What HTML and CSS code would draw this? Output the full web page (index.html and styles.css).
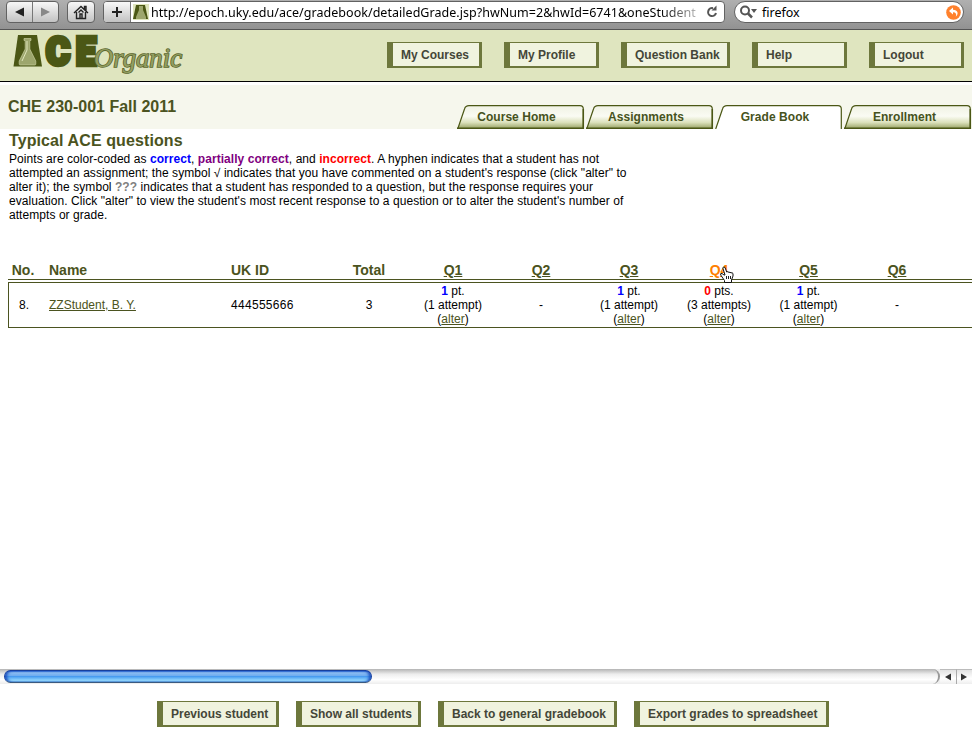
FILE: index.html
```html
<!DOCTYPE html>
<html lang="en">
<head>
<meta charset="utf-8">
<title>ACE Organic gradebook</title>
<link rel="stylesheet" href="styles.css">
</head>
<body>
<div class="browser">
  <div class="btns nav">
    <span><svg width="10" height="10"><path d="M0 5L9 .5v9z" fill="#222"/></svg></span>
    <span><svg width="10" height="10"><path d="M9 5L0 .5v9z" fill="#888"/></svg></span>
  </div>
  <div class="btns home"><span><svg width="16" height="15" fill="none" stroke="#222" stroke-width="1.4"><path d="M1 8L8 1.500 15 8M3.500 7v6.500h9V7M11.500 4V1.500h1.500v4M5.500 7.500L8 5l2.500 2.500"/><path d="M7 13V9h2v4" /></svg></span></div>
  <div class="address">
    <span class="plus"><svg width="12" height="12"><path d="M6 1v10M1 6h10" stroke="#222" stroke-width="2"/></svg></span>
    <svg class="fav" width="16" height="16"><rect width="16" height="16" fill="#dfe5bc"/><path d="M3 1h9l3 14H0z" fill="#4b5715"/><path d="M6 2h4v4l3 7v2H3v-2l3-7z" fill="#9da66d"/></svg>
    <span class="url">http://epoch.uky.edu/ace/gradebook/detailedGrade.jsp?hwNum=2&amp;hwId=6741&amp;oneStudent</span>
    <svg class="reload" width="14" height="14"><path d="M8 3.200A4 4 0 1 0 11 8" fill="none" stroke="#555" stroke-width="2"/><path d="M6.500 5.500h5V.5z" fill="#555"/></svg>
  </div>
  <div class="search">
    <svg width="20" height="14"><circle cx="6" cy="5.500" r="4" fill="none" stroke="#555" stroke-width="2"/><path d="M9 8.500l4 4" stroke="#555" stroke-width="2.500"/><path d="M12 4h6l-3 4z" fill="#555"/></svg>
    <span>firefox</span>
    <svg class="back" width="15" height="15"><circle cx="7.500" cy="7.500" r="7.300" fill="#ff812d"/><path d="M3 6l4-3.500v2.300c5 0 6 4 2.800 7 1-3 0-4.600-2.800-4.600v2.300z" fill="#fff"/></svg>
  </div>
</div>
<header class="top">
  <svg class="logo" width="190" height="51">
    <g class="ace"><path d="M5 5h19l5 31.500H.5z" fill="#4b5715"/>
    <text x="33" y="34.800" textLength="24" lengthAdjust="spacingAndGlyphs">C</text><text x="63" y="34.800" textLength="20" lengthAdjust="spacingAndGlyphs">E</text></g>
    <path d="M11 8.500h7v2h-1.200v8.500l6 12v3q0 1-1 1H7.200q-1 0-1-1v-3l6-12v-8.500H11z" fill="#9da66d" stroke="#c5cd9c" stroke-width=".7"/>
    <path d="M14 11v9l-5 11" fill="none" stroke="#dfe5bc"/>
    <text class="organic" x="81" y="37" textLength="88" lengthAdjust="spacingAndGlyphs">Organic</text>
  </svg>
  <nav><a class="button">My Courses</a><a class="button">My Profile</a><a class="button wide">Question Bank</a><a class="button">Help</a><a class="button">Logout</a></nav>
</header>
<div class="course">
  <h1>CHE 230-001 Fall 2011</h1>
  <svg class="tabs" width="516" height="24">
    <defs>
      <linearGradient id="g" x2="0" y2="1"><stop stop-color="#f0f2e4"/><stop offset=".45" stop-color="#fafbf3"/><stop offset=".72" stop-color="#dbe1bb"/><stop offset="1" stop-color="#929d5c"/></linearGradient>
      <path id="t" d="M.7 24L7.500 4Q8.500 .7 12 .7H123Q126.300 .7 126.300 4V24"/>
    </defs>
    <g class="tab"><use href="#t"/><path d="M0 23.300h127M126.300 4v20"/><text x="59.500" y="16">Course Home</text></g>
    <g class="tab" transform="translate(129)"><use href="#t"/><path d="M0 23.300h127M126.300 4v20"/><text x="60" y="16">Assignments</text></g>
    <g class="tab active" transform="translate(258)"><use href="#t"/><text x="60" y="16">Grade Book</text></g>
    <g class="tab" transform="translate(387)"><use href="#t"/><path d="M0 23.300h127M126.300 4v20"/><text x="60.500" y="16">Enrollment</text></g>
  </svg>
</div>
<main>
  <h2>Typical ACE questions</h2>
  <p>Points are color-coded as <b class="ok">correct</b>, <b class="part">partially correct</b>, and <b class="bad">incorrect</b>. A hyphen indicates that a student has not<br>attempted an assignment; the symbol √ indicates that you have commented on a student's response (click "alter" to<br>alter it); the symbol <b class="unk">???</b> indicates that a student has responded to a question, but the response requires your<br>evaluation. Click "alter" to view the student's most recent response to a question or to alter the student's number of<br>attempts or grade.</p>
  <div class="grades">
    <div class="row head"><span>No.</span><span class="l">Name</span><span class="l">UK ID</span><span>Total</span><a>Q1</a><a>Q2</a><a>Q3</a><a class="hover">Q4<svg class="cursor" width="15" height="17"><path d="M4 9L2 7.500Q0 7 .7 9l3.800 5.500v2h7v-2.500l1.500-4V7.500q-1-1.500-2-.5-1-1.500-2-.5-1-1.500-2.300-.5L5 1.500Q3.500 0 2.800 2L5 9z" fill="#fff" stroke="#111"/><path d="M6.500 10v3M8.500 10v3M10.500 10v3" stroke="#222"/></svg></a><a>Q5</a><a>Q6</a></div>
    <div class="row student"><span>8.</span><span class="l"><a>ZZStudent, B. Y.</a></span><span class="l id">444555666</span><span>3</span>
      <span><b class="ok">1</b> pt.<br>(1 attempt)<br>(<a>alter</a>)</span><span>-</span><span><b class="ok">1</b> pt.<br>(1 attempt)<br>(<a>alter</a>)</span><span><b class="bad">0</b> pts.<br>(3 attempts)<br>(<a>alter</a>)</span><span><b class="ok">1</b> pt.<br>(1 attempt)<br>(<a>alter</a>)</span><span>-</span></div>
  </div>
</main>
<div class="scroll"><div class="track"><div class="thumb"></div></div>
  <span class="arrow"><svg width="6" height="8"><path d="M0 4l6-3.500v7z" fill="#333"/></svg></span><span class="arrow"><svg width="6" height="8"><path d="M6 4L0 .5v7z" fill="#333"/></svg></span></div>
<footer><a class="button f1">Previous student</a><a class="button f2">Show all students</a><a class="button f3">Back to general gradebook</a><a class="button f4">Export grades to spreadsheet</a></footer>
</body>
</html>
```
FILE: styles.css
```css
* { box-sizing: border-box; }
body { margin: 0; width: 972px; height: 731px; overflow: hidden; background: #fff; color: #000; font: 12px/14px "Liberation Sans", Arial, sans-serif; display: flex; flex-direction: column; }
svg { display: block; flex: none; }
.browser { height: 30px; flex: none; display: flex; align-items: flex-start; padding: 1px 8px 0 6px; background: linear-gradient(#b0b0b0, #929292); border-bottom: 1px solid #555; font: 12.500px "Noto Sans", sans-serif; }
.btns { display: flex; height: 22px; border: 1px solid #626262; border-radius: 4px; background: linear-gradient(#f8f8f8, #c2c2c2); }
.btns span { flex: 1; display: flex; align-items: center; justify-content: center; }
.btns span + span { border-left: 1px solid #777; }
.nav { width: 53px; margin-right: 8px; }
.home { width: 28px; margin-right: 8px; }
.address { width: 622px; height: 22px; border: 1px solid #626262; border-radius: 4px; background: #fff; display: flex; align-items: center; overflow: hidden; margin-right: 9px; }
.plus { width: 27px; height: 20px; display: flex; align-items: center; justify-content: center; background: linear-gradient(#f8f8f8, #c2c2c2); border-right: 1px solid #777; margin-right: 2px; flex: none; }
.fav { margin-right: 2px; }
.url { width: 546px; white-space: nowrap; overflow: hidden; flex: none; letter-spacing: .035px; -webkit-mask-image: linear-gradient(90deg, #000 510px, #0004 546px); }
.reload { margin-left: 8px; }
.search { width: 230px; height: 22px; border: 1px solid #626262; border-radius: 11px; background: #fff; display: flex; align-items: center; padding: 0 2px 0 4px; }
.search span { flex: 1; margin-left: 3px; }
.top { height: 52px; flex: none; display: flex; justify-content: space-between; background: #dfe5bf; border-bottom: 1px solid #000; padding: 0 8px 0 13px; }
.logo { overflow: visible; }
.ace { font: 900 38px Roboto, sans-serif; fill: #4b5715; stroke: #4b5715; stroke-width: 4.500px; }
.ace path { stroke: none; }
.organic { font: italic 28px "Liberation Serif", serif; fill: #929d61; stroke: #59642b; stroke-width: 1.600px; paint-order: stroke; }
nav { display: flex; gap: 22px; padding-top: 12px; }
.button { display: block; width: 95px; height: 26px; border: 1px solid #6d773c; border-width: 1px 3px 2px 6px; background: #f0f3df; color: #444638; font: bold 12px/24px "Liberation Sans", Arial, sans-serif; padding-left: 8px; white-space: nowrap; }
.button.wide { width: 109px; }
.course { height: 47px; flex: none; background: #f6f7ed; border-top: 3px solid #fff; display: flex; justify-content: space-between; padding: 0 0 0 8px; align-items: flex-end; }
h1 { font: bold 16px/20px "Liberation Sans", Arial, sans-serif; margin: 0 0 12px; color: #4b5320; }
.tabs { margin-right: -1px; }
.tab use { fill: url(#g); stroke: #4b5715; stroke-width: 1.2px; }
.tab path { stroke: #4b5715; stroke-width: 1.500px; }
.tab text { font: bold 12px "Liberation Sans", Arial, sans-serif; fill: #465220; stroke: none; text-anchor: middle; letter-spacing: .05px; }
.active use { fill: #fff; }
main { height: 540px; flex: none; padding: 2px 0 0 8px; overflow: hidden; }
h2 { font: bold 16px/20px "Liberation Sans", Arial, sans-serif; letter-spacing: .1px; margin: 0 0 1px 1px; color: #4b5320; }
p { margin: 0 0 0 1px; white-space: nowrap; letter-spacing: .058px; }
.ok { color: #00f; } .part { color: #800080; } .bad { color: #f00; } .unk { color: #808080; }
.grades { margin-top: 39px; width: 1100px; }
.row { display: grid; grid-template-columns: 32px 182px 113px 68px 100px 76px 100px 80px 99px 78px; text-align: center; }
.row .l { text-align: left; padding-left: 9px; }
.row a { color: #4b5320; text-decoration: underline; }
.head { height: 19px; font: bold 14px/18px "Liberation Sans", Arial, sans-serif; color: #4b5320; border-bottom: 1px solid #4b5320; }
.head > :first-child { margin-left: -1px; margin-right: 1px; }
.head .hover { color: #ff8000; position: relative; }
.cursor { position: absolute; left: 41px; top: 5px; }
.student { margin-top: 2px; height: 46px; border: 1px solid #4b5320; align-content: start; align-items: center; }
.student > span { margin-left: -1px; margin-right: 1px; line-height: 14px; padding-top: 1px; }
.id { letter-spacing: .3px; }
.scroll { height: 15px; flex: none; display: flex; background: #eee; }
.track { width: 940px; background: linear-gradient(#b4b4b4, #eee 35%, #fff 70%, #ededed); border-radius: 0 8px 8px 0; border-right: 2px solid #999; padding: 1px 0 0 4px; }
.thumb { width: 368px; height: 13px; border: 1px solid #173f9e; border-bottom-color: #3a5a80; border-radius: 7px; background: linear-gradient(#2460d0, #8cbdf2 15%, #6dabf0 45%, #479bf0 50%, #9ddfff 90%, #5493ce); box-shadow: inset 3px 0 3px -1px #1b51c0, inset -3px 0 3px -1px #1b51c0; }
.arrow { flex: 1; display: flex; align-items: center; justify-content: center; border-top: 1px solid #bbb; background: linear-gradient(#e2e2e2, #fff 60%, #eee); }
.arrow + .arrow { border-left: 1px solid #aaa; }
footer { display: flex; gap: 17px; padding: 17px 0 0 157px; }
.f1 { width: 122px; } .f2 { width: 125px; } .f3 { width: 179px; } .f4 { width: 195px; }
```
